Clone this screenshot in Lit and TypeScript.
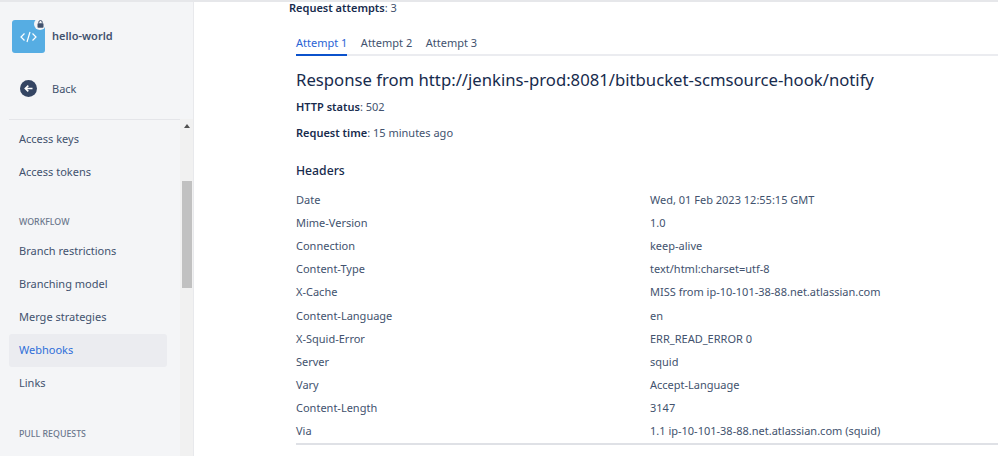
import { LitElement, html, css } from "lit";
import { customElement } from "lit/decorators.js";

const HEADERS: [string, string][] = [
  ["Date", "Wed, 01 Feb 2023 12:55:15 GMT"],
  ["Mime-Version", "1.0"],
  ["Connection", "keep-alive"],
  ["Content-Type", "text/html:charset=utf-8"],
  ["X-Cache", "MISS from ip-10-101-38-88.net.atlassian.com"],
  ["Content-Language", "en"],
  ["X-Squid-Error", "ERR_READ_ERROR 0"],
  ["Server", "squid"],
  ["Vary", "Accept-Language"],
  ["Content-Length", "3147"],
  ["Via", "1.1 ip-10-101-38-88.net.atlassian.com (squid)"],
];

@customElement("app-root")
export class AppRoot extends LitElement {
  static styles = css`
    :host {
      display: block;
      height: 456px;
      overflow: hidden;
      font-family: "Noto Sans", "Open Sans", sans-serif;
      font-size: 11px;
      color: #42526e;
    }
    .page {
      display: flex;
      height: 456px;
      border-top: 2px solid #e6e7ea;
      box-sizing: border-box;
    }
    .side {
      width: 194px;
      flex: none;
      box-sizing: border-box;
      background: #f4f5f7;
      border-right: 1px solid #e8e9ec;
      display: flex;
      flex-direction: column;
    }
    .repo {
      display: flex;
      align-items: center;
      gap: 7px;
      padding: 18px 0 0 12px;
    }
    .avatar {
      position: relative;
      width: 33px;
      height: 33px;
      border-radius: 3px;
      background: #56ade3;
      display: flex;
      align-items: center;
      justify-content: center;
    }
    .lock {
      position: absolute;
      top: -2px;
      right: -1px;
      width: 12px;
      height: 12px;
      border-radius: 50%;
      background: #f4f5f7;
      display: flex;
      align-items: center;
      justify-content: center;
    }
    .repo-name {
      font-weight: 600;
      font-size: 11px;
      color: #42526e;
      padding-bottom: 2px;
    }
    .back {
      display: flex;
      align-items: center;
      gap: 15px;
      padding: 25px 0 0 20px;
      height: 20px;
    }
    .scroller {
      margin: 21px 0 0 9px;
      flex: 1;
      display: flex;
      min-height: 0;
    }
    .nav {
      width: 171px;
      flex: none;
      overflow: hidden;
      padding-top: 3px;
      border-top: 1px solid #e4e5e9;
    }
    .item {
      height: 33px;
      width: 158px;
      box-sizing: border-box;
      display: flex;
      align-items: center;
      padding: 0 0 2px 10px;
      border-radius: 3px;
    }
    .item.on {
      background: #ebecf0;
      color: #2f6fd9;
    }
    .group {
      font-size: 8.8px;
      font-weight: 500;
      color: #6b778c;
      padding: 2px 0 0 10px;
      height: 16px;
      box-sizing: border-box;
      display: flex;
      align-items: center;
    }
    .gap-a {
      height: 24px;
    }
    .gap-b {
      height: 6px;
    }
    .gap-c {
      height: 25px;
    }
    .track {
      flex: 1;
      background: #f1f1f1;
      position: relative;
    }
    .arrow {
      position: absolute;
      top: 5px;
      left: 4px;
      width: 0;
      height: 0;
      border: 3px solid transparent;
      border-top: 0;
      border-bottom: 4px solid #505050;
    }
    .thumb {
      position: absolute;
      top: 62px;
      left: 2px;
      width: 10px;
      height: 107px;
      background: #c1c1c1;
    }
    .main {
      flex: 1;
      min-width: 0;
      padding-left: 95px;
    }
    .attempts {
      line-height: 14px;
      height: 14px;
      margin-top: -1px;
    }
    b {
      font-weight: 600;
      color: #172b4d;
    }
    .body {
      padding-left: 7px;
    }
    .tabs {
      display: flex;
      gap: 13.5px;
      margin-top: 19px;
      border-bottom: 2px solid #ebecf0;
      height: 20px;
    }
    .tab {
      height: 20px;
      line-height: 18px;
      box-sizing: border-box;
    }
    .tab.on {
      color: #2a63d4;
      border-bottom: 2px solid #0b52cc;
      height: 22px;
    }
    h1 {
      margin: 12px 0 0;
      font-size: 16.7px;
      font-weight: 400;
      line-height: 24px;
      color: #172b4d;
    }
    .meta {
      margin: 6px 0 0;
      line-height: 17px;
    }
    .meta + .meta {
      margin-top: 9px;
    }
    h2 {
      margin: 21px 0 0;
      font-size: 12.2px;
      font-weight: 500;
      line-height: 18px;
      color: #172b4d;
    }
    .rows {
      margin-top: 9px;
      border-bottom: 2px solid #dfe1e6;
    }
    .row {
      display: grid;
      grid-template-columns: 354px 1fr;
      height: 23.1px;
      box-sizing: border-box;
      padding-bottom: 2px;
      align-items: center;
    }
  `;

  render() {
    return html`
      <div class="page">
        <aside class="side">
          <div class="repo">
            <div class="avatar">
              <svg width="17" height="12" viewBox="0 0 17 12" fill="none" stroke="#fff" stroke-width="1.2">
                <path d="M4.5 2.5 1 6l3.5 3.5M12.5 2.5 16 6l-3.5 3.5M10 1 7 11" />
              </svg>
              <span class="lock">
                <svg width="7" height="8" viewBox="0 0 7 8">
                  <rect x="0.5" y="3.2" width="6" height="4.6" rx="0.8" fill="#42526e" />
                  <path d="M1.8 3.4V2.2a1.7 1.7 0 0 1 3.4 0v1.2" fill="none" stroke="#42526e" />
                </svg>
              </span>
            </div>
            <span class="repo-name">hello-world</span>
          </div>
          <div class="back">
            <svg width="17" height="17" viewBox="0 0 17 17">
              <circle cx="8.5" cy="8.5" r="8.5" fill="#344563" />
              <path d="M12.5 8.5H5.5M8.3 5.6 5.3 8.5l3 2.9" fill="none" stroke="#fff" stroke-width="1.6" />
            </svg>
            <span>Back</span>
          </div>
          <div class="scroller">
            <nav class="nav">
              <div class="item">Access keys</div>
              <div class="item">Access tokens</div>
              <div class="gap-a"></div>
              <div class="group">WORKFLOW</div>
              <div class="gap-b"></div>
              <div class="item">Branch restrictions</div>
              <div class="item">Branching model</div>
              <div class="item">Merge strategies</div>
              <div class="item on">Webhooks</div>
              <div class="item">Links</div>
              <div class="gap-c"></div>
              <div class="group">PULL REQUESTS</div>
            </nav>
            <div class="track"><span class="arrow"></span><span class="thumb"></span></div>
          </div>
        </aside>
        <main class="main">
          <div class="attempts"><b>Request attempts</b>: 3</div>
          <div class="body">
            <div class="tabs">
              <div class="tab on">Attempt 1</div>
              <div class="tab">Attempt 2</div>
              <div class="tab">Attempt 3</div>
            </div>
            <h1>Response from http://jenkins-prod:8081/bitbucket-scmsource-hook/notify</h1>
            <p class="meta"><b>HTTP status</b>: 502</p>
            <p class="meta"><b>Request time</b>: 15 minutes ago</p>
            <h2>Headers</h2>
            <div class="rows">
              ${HEADERS.map(([k, v]) => html`<div class="row"><span>${k}</span><span>${v}</span></div>`)}
            </div>
          </div>
        </main>
      </div>
    `;
  }
}
